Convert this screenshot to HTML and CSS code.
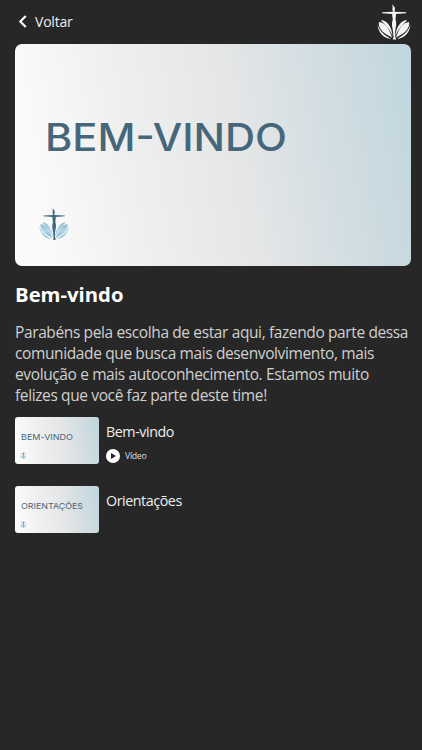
FILE: index.html
```html
<!DOCTYPE html>
<html lang="pt-BR">

<head>
  <meta charset="UTF-8" />
  <meta name="viewport" content="width=device-width, initial-scale=1" />
  <title>Bem-vindo</title>
  <link rel="stylesheet" href="styles.css">
</head>

<body>
  <!-- Desenhos reutilizados -->
  <svg class="sprites" aria-hidden="true">
    <defs>
      <linearGradient id="fundo" x1="0" y1="0.1" x2="1" y2="0">
        <stop offset="0" stop-color="#fafafa" />
        <stop offset="0.25" stop-color="#efeff0" />
        <stop offset="0.55" stop-color="#e3e5e6" />
        <stop offset="0.8" stop-color="#cfdce1" />
        <stop offset="1" stop-color="#c0d6de" />
      </linearGradient>
      <linearGradient id="petala" x1="0" y1="0" x2="0" y2="1">
        <stop offset="0" stop-color="#8fb9d0" />
        <stop offset="0.5" stop-color="#b5d7e8" />
        <stop offset="1" stop-color="#7fb0ca" />
      </linearGradient>
      <symbol id="logo" viewBox="0 0 34 38">
        <g class="petalas">
          <path d="M15 34.500C11 23 8 19.500 1.500 18.500c-.5 3 .5 6.500 3.500 9.500 2.500 2.500 6 4.500 10 6.500z" />
          <path d="M15.500 33C15 24 10 17 4 16.500c-1 1.500 8 6 11.500 16.500z" />
          <path d="M14 36C6 34.500 1 30 0 21c2 6.500 7 11 14 15z" />
          <path d="M19 34.500C23 23 26 19.500 32.500 18.500c.5 3-.5 6.500-3.500 9.500-2.500 2.500-6 4.500-10 6.500z" />
          <path d="M18.500 33C19 24 24 17 30 16.500c1 1.500-8 6-11.500 16.500z" />
          <path d="M20 36c8-1.500 13-6 14-15-2 6.500-7 11-14 15z" />
        </g>
        <g class="figura">
          <path d="M15.800 0c0 2 1.900 2.500 2.100 4 .2 1.300-.2 2.300-.5 4l12 .6v1l-10.400.7c.3 2.500-.6 4-.4 6 .9 2.500.9 5 .3 7.500l-.8 5 .2 5.200 1 2.500h-3.600l.8-2.500-.4-5.200-.9-5c-.5-2.500-.3-5 .5-7.500.1-2-.8-3.500-.5-6L4.800 9.600v-1l11.200-.6c-.7-2-.8-3-.4-4.500-.3-1-.2-2 .2-3.500z" />
        </g>
      </symbol>
    </defs>
  </svg>

  <header>
    <a class="voltar" href="#">
      <svg class="seta" viewBox="0 0 8 12" aria-hidden="true"><path d="M7 1L2 6l5 5" /></svg>
      Voltar
    </a>
    <svg class="marca" role="img" aria-label="Logo"><use href="#logo" /></svg>
  </header>

  <main>
    <svg class="capa" viewBox="0 0 396 222" preserveAspectRatio="none">
      <rect width="396" height="222" fill="url(#fundo)" />
      <text class="capa-texto" x="30" y="106.500" textLength="242" lengthAdjust="spacingAndGlyphs">BEM-VINDO</text>
      <use class="capa-logo" href="#logo" x="24" y="164" width="30" height="33" />
    </svg>

    <h1>Bem-vindo</h1>
    <p class="descricao">Parabéns pela escolha de estar aqui, fazendo parte dessa comunidade que busca mais desenvolvimento, mais evolução e mais autoconhecimento. Estamos muito felizes que você faz parte deste time!</p>

    <ul class="aulas">
      <li>
        <svg class="miniatura" viewBox="0 0 84 47">
          <rect width="84" height="47" fill="url(#fundo)" />
          <text class="mini-texto" x="6" y="23" textLength="52" lengthAdjust="spacingAndGlyphs">BEM-VINDO</text>
          <use class="capa-logo" href="#logo" x="5" y="35" width="6.500" height="7" />
        </svg>
        <div class="aula-info">
          <h2>Bem-vindo</h2>
          <span class="tipo">
            <svg class="play" viewBox="0 0 14 14" aria-hidden="true">
              <circle cx="7" cy="7" r="7" />
              <path d="M5 4l5 3-5 3z" />
            </svg>
            Vídeo
          </span>
        </div>
      </li>
      <li>
        <svg class="miniatura" viewBox="0 0 84 47">
          <rect width="84" height="47" fill="url(#fundo)" />
          <text class="mini-texto" x="6" y="22.500" textLength="62" lengthAdjust="spacingAndGlyphs">ORIENTAÇÕES</text>
          <use class="capa-logo" href="#logo" x="5" y="35" width="6.500" height="7" />
        </svg>
        <div class="aula-info">
          <h2>Orientações</h2>
        </div>
      </li>
    </ul>
  </main>
</body>

</html>
```

FILE: styles.css
```css
* {
  box-sizing: border-box;
}

body {
  margin: 0;
  min-height: 100vh;
  font-family: "Open Sans", "Noto Sans", sans-serif;
  background-color: #272727;
  color: #fff;
}

.sprites {
  display: block;
  width: 0;
  height: 0;
}

header {
  display: flex;
  justify-content: space-between;
  align-items: center;
  height: 44px;
  padding: 0 11px 0 18px;
}

.voltar {
  display: flex;
  align-items: center;
  gap: 8px;
  padding-bottom: 1px;
  font-size: 14px;
  line-height: 19px;
  letter-spacing: -0.2px;
  color: #eee;
  text-decoration: none;
}

.seta {
  width: 9px;
  height: 13px;
  fill: none;
  stroke: #fff;
  stroke-width: 2;
}

.marca {
  width: 34px;
  height: 37px;
}

main {
  padding: 0 11px 0 15px;
}

.capa {
  display: block;
  width: 100%;
  height: 222px;
  border-radius: 7px;
}

.capa-texto {
  font-family: Inter, sans-serif;
  font-size: 37.5px;
  font-weight: 450;
  fill: #466679;
}

.capa-logo {
  --cor-petala: url(#petala);
  --cor-figura: #3f6a80;
}

.petalas {
  fill: var(--cor-petala, #f4f4f4);
}

.figura {
  fill: var(--cor-figura, #f4f4f4);
}

h1 {
  margin: 14px 0 0;
  font-size: 20.3px;
  line-height: 28px;
  font-weight: 700;
}

.descricao {
  margin: 14px 0 0;
  font-size: 15.5px;
  line-height: 21px;
  letter-spacing: -0.38px;
  color: #d0d0d0;
}

.aulas {
  list-style: none;
  display: flex;
  flex-direction: column;
  gap: 22px;
  margin: 11px 0 0;
  padding: 0;
}

.aulas li {
  display: flex;
  gap: 7px;
}

.miniatura {
  width: 84px;
  height: 47px;
  border-radius: 3px;
}

.mini-texto {
  font-family: Inter, sans-serif;
  font-size: 8px;
  fill: #466679;
}

.aula-info {
  display: flex;
  flex-direction: column;
  gap: 8px;
  padding-top: 5px;
}

h2 {
  margin: 0;
  font-size: 14.3px;
  line-height: 19px;
  font-weight: 500;
  letter-spacing: -0.45px;
  color: #eee;
}

.tipo {
  display: flex;
  align-items: center;
  gap: 5px;
  font-size: 8.8px;
  line-height: 14px;
  letter-spacing: -0.35px;
  color: #ddd;
}

.play {
  width: 14px;
  height: 14px;
  fill: #fff;
}

.play path {
  fill: #222;
}
```
